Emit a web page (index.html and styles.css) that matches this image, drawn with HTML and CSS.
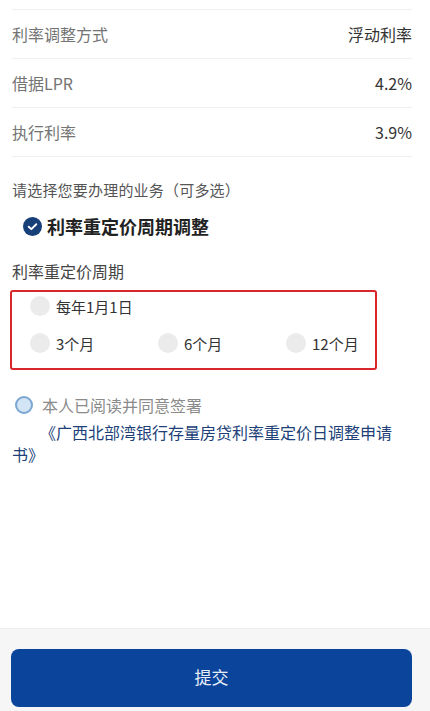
FILE: index.html
```html
<!DOCTYPE html>
<html lang="zh-CN">
<head>
  <meta charset="UTF-8" />
  <meta name="viewport" content="width=device-width, initial-scale=1.0">
  <title>利率重定价周期调整</title>
  <link rel="stylesheet" href="styles.css">
</head>
<body>

  <div class="page">
    <!-- 利率信息 -->
    <div class="info">
      <div class="info-row">
        <span class="label">利率调整方式</span>
        <span class="value">浮动利率</span>
      </div>
      <div class="info-row">
        <span class="label">借据LPR</span>
        <span class="value">4.2%</span>
      </div>
      <div class="info-row">
        <span class="label">执行利率</span>
        <span class="value">3.9%</span>
      </div>
    </div>

    <div class="section">
      <p class="hint">请选择您要办理的业务（可多选）</p>

      <div class="business">
        <svg class="check" width="19" height="19" viewBox="0 0 20 20">
          <circle cx="10" cy="10" r="10" fill="#173f78" />
          <path d="M6 10.2 L8.8 12.8 L14 7.6" fill="none" stroke="#fff" stroke-width="2" stroke-linecap="round" stroke-linejoin="round" />
        </svg>
        <span>利率重定价周期调整</span>
      </div>

      <p class="period-title">利率重定价周期</p>

      <div class="period-box">
        <div class="period-row">
          <label class="radio"><span class="dot"></span>每年1月1日</label>
        </div>
        <div class="period-row">
          <label class="radio"><span class="dot"></span>3个月</label>
          <label class="radio"><span class="dot"></span>6个月</label>
          <label class="radio"><span class="dot"></span>12个月</label>
        </div>
      </div>

      <div class="agree">
        <span class="agree-dot"></span>
        <span>本人已阅读并同意签署</span>
      </div>
      <p class="agree-link">《广西北部湾银行存量房贷利率重定价日调整申请书》</p>
    </div>
  </div>

  <div class="footer">
    <button class="submit">提交</button>
  </div>

</body>
</html>
```

FILE: styles.css
```css
body {
  font-family: "Noto Sans CJK SC", "Noto Sans", sans-serif;
  background: #fff;
  color: #333;
  margin: 0;
  min-height: 100vh;
  display: flex;
  flex-direction: column;
}
p {
  margin: 0;
}
.page {
  flex: 1;
}
.info {
  padding-top: 9px;
}
.info-row {
  display: flex;
  justify-content: space-between;
  align-items: center;
  height: 48px;
  margin: 0 18px 0 12px;
  border-top: 1px solid #f0f0f0;
  font-size: 16px;
}
.info-row:last-child {
  border-bottom: 1px solid #f0f0f0;
}
.label {
  color: #747474;
}
.value {
  color: #333;
}
.section {
  padding: 0 12px;
}
.hint {
  margin-top: 22px;
  font-size: 15px;
  line-height: 22px;
  letter-spacing: 0.2px;
  color: #555;
}
.business {
  display: flex;
  align-items: center;
  gap: 5px;
  margin-top: 12px;
  padding-left: 11px;
  height: 26px;
  font-size: 18px;
  font-weight: bold;
  color: #222;
}
.period-title {
  margin-top: 21px;
  font-size: 16px;
  line-height: 22px;
  color: #444;
}
.period-box {
  box-sizing: border-box;
  width: 367px;
  margin: 8px 0 0 -2px;
  border: 2px solid #d8262b;
  border-radius: 3px;
  padding: 1px 0 12px 18px;
  display: flex;
  flex-direction: column;
  gap: 11px;
}
.period-row {
  display: grid;
  grid-template-columns: 128px 128px auto;
  height: 26px;
}
.radio {
  display: flex;
  align-items: center;
  gap: 6px;
  font-size: 15px;
  color: #333;
}
.dot {
  width: 20px;
  height: 20px;
  border-radius: 50%;
  background: #ebebeb;
}
.agree {
  display: flex;
  align-items: center;
  gap: 9px;
  margin-top: 24px;
  padding-left: 3px;
  height: 22px;
  font-size: 16px;
  color: #8a8a8a;
}
.agree-dot {
  box-sizing: border-box;
  width: 18px;
  height: 18px;
  border-radius: 50%;
  border: 2px solid #7aa6d2;
  background: #d3e4f5;
}
.agree-link {
  margin-top: 5px;
  padding-right: 20px;
  text-indent: 28px;
  font-size: 16px;
  line-height: 22px;
  color: #213f78;
}
.footer {
  background: #f6f6f6;
  border-top: 1px solid #eeeeee;
  padding: 20px 18px 4px 11px;
}
.submit {
  display: block;
  width: 100%;
  height: 58px;
  border: none;
  border-radius: 8px;
  background: #0b449b;
  color: #e8eef8;
  font-family: inherit;
  font-size: 17px;
  padding-bottom: 4px;
}
```
